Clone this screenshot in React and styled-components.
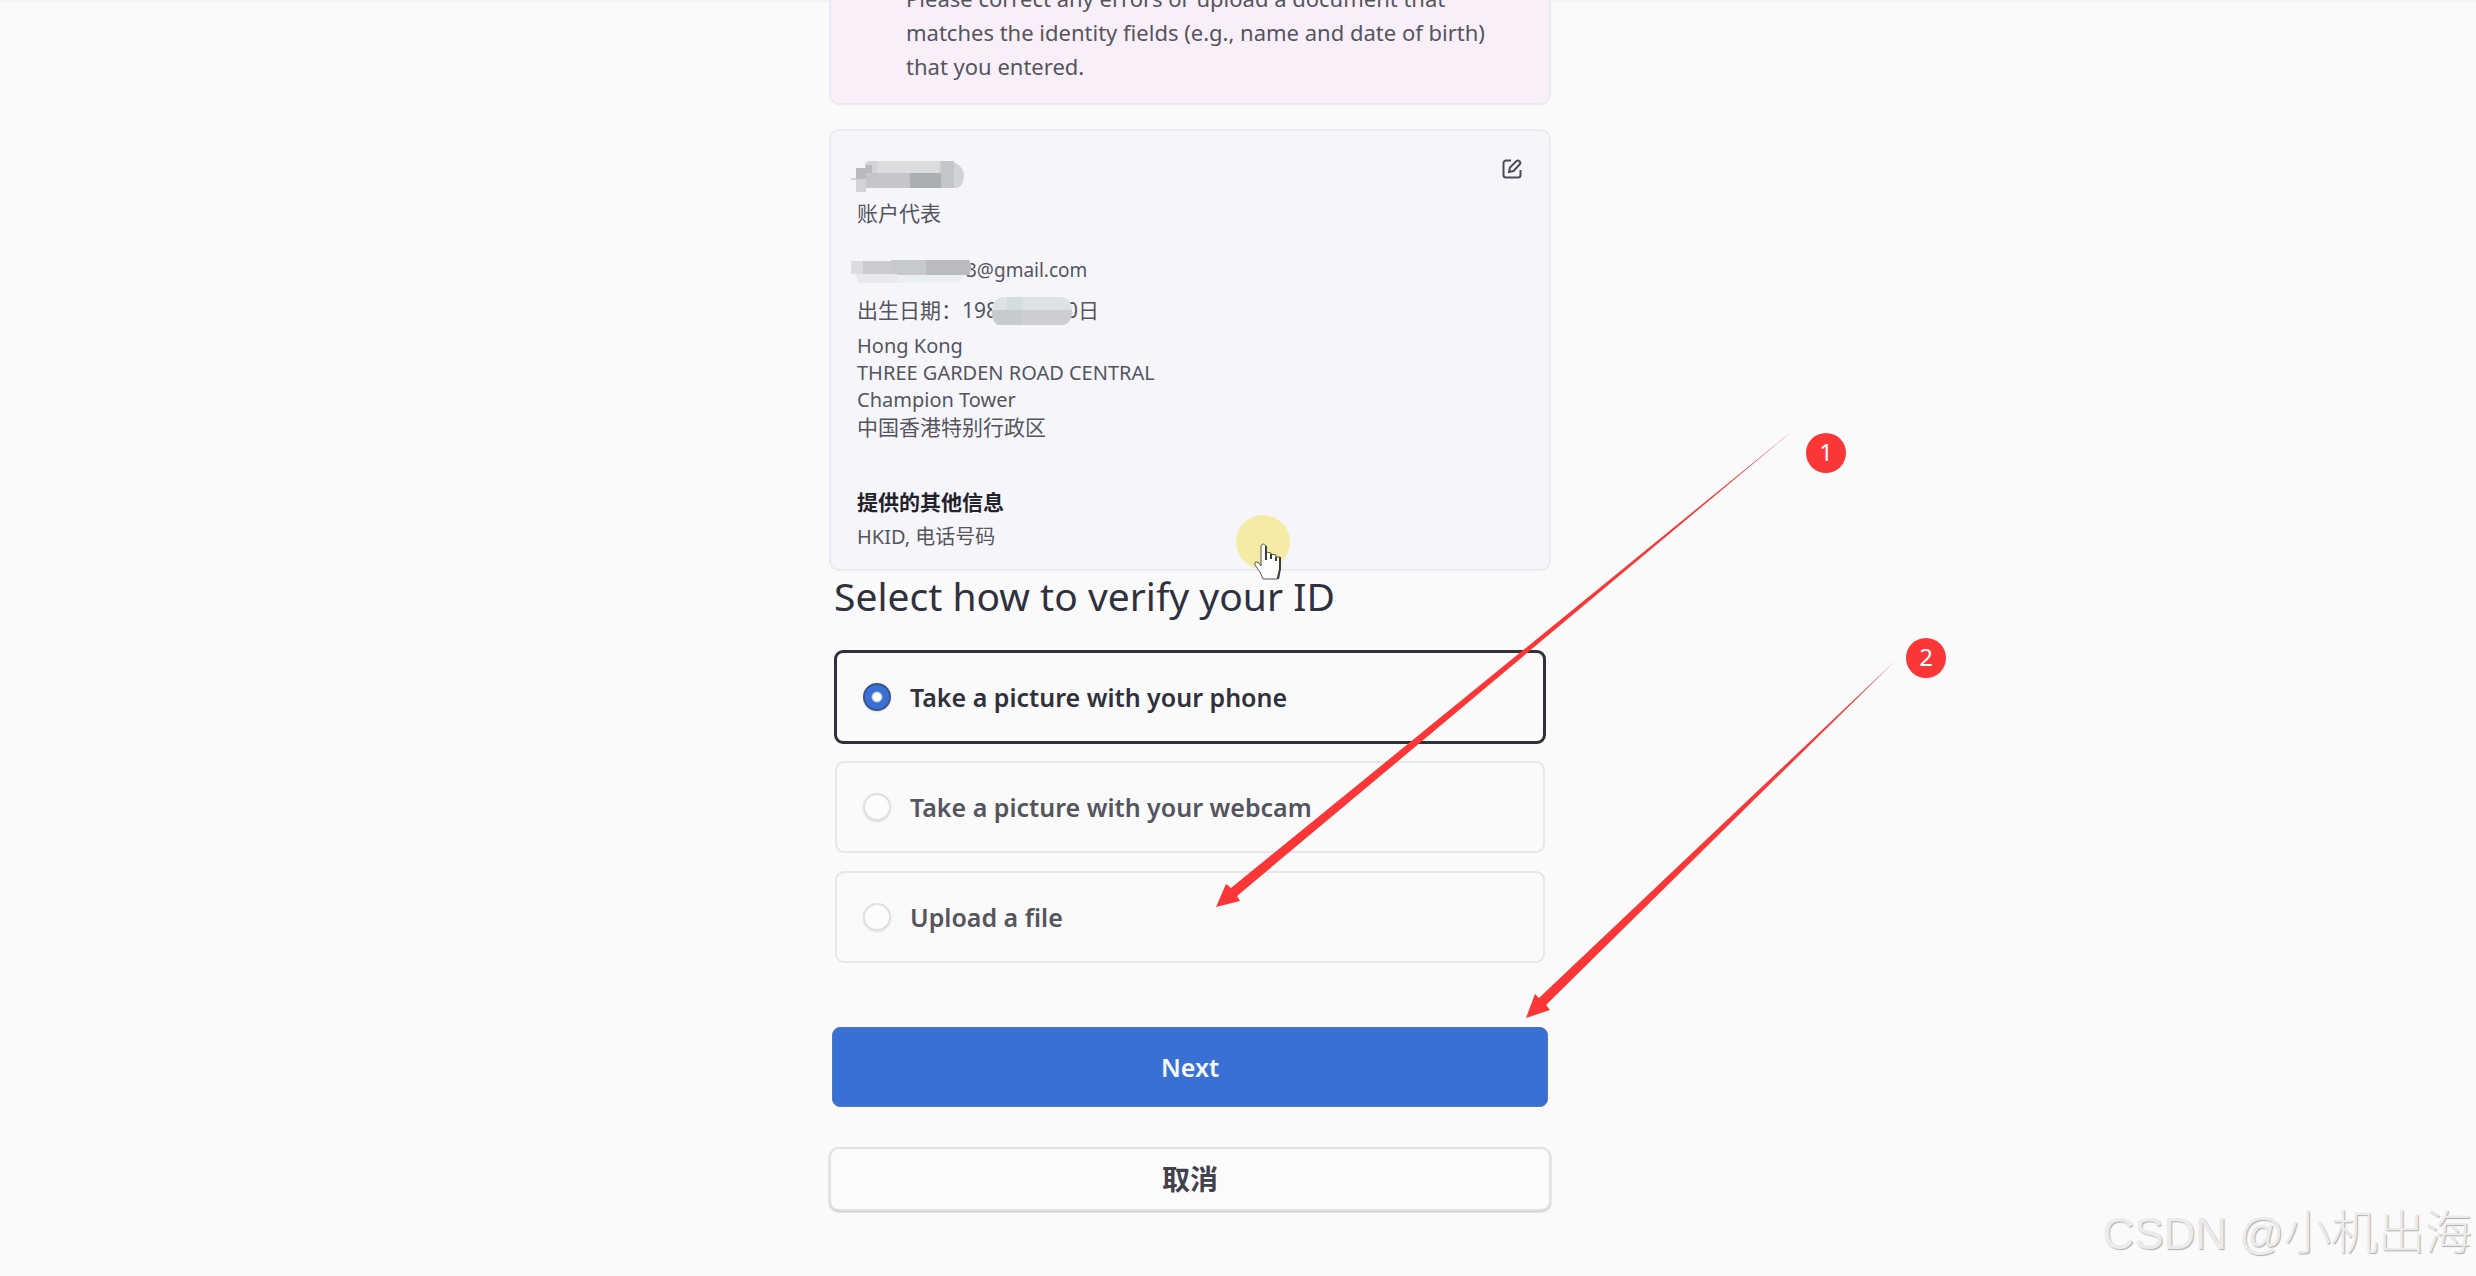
import { useState } from "react";
import styled, { createGlobalStyle } from "styled-components";

const GlobalStyle = createGlobalStyle`
  * {
    box-sizing: border-box;
  }

  body {
    margin: 0;
    background: #fafafb;
    font-family: "Noto Sans", "Noto Sans CJK SC", sans-serif;
    color: #55555d;
  }

  h2, h3, p, fieldset, address {
    margin: 0;
    padding: 0;
  }
`;

const Page = styled.div`
  position: relative;
  min-height: 100vh;
  padding-right: 96px;
  overflow: hidden;
  box-shadow: inset 0 2px 0 #f4f4f6;
`;

const Column = styled.main`
  width: 100%;
  max-width: 722px;
  margin: 0 auto;
`;

const Alert = styled.div`
  display: flex;
  align-items: flex-end;
  height: 105px;
  padding: 0 48px 20px 75px;
  border: 2px solid #ece9f2;
  border-top: none;
  border-radius: 0 0 10px 10px;
  background: #f9eff8;
  font-size: 22px;
  line-height: 34px;
`;

const Card = styled.section`
  height: 442px;
  margin-top: 24px;
  padding: 28px 27px 0 26px;
  border: 2px solid #e9ebf1;
  border-radius: 10px;
  background: #f5f5fa;
  font-size: 20px;
  line-height: 27px;
`;

const CardHeader = styled.div`
  display: flex;
  justify-content: space-between;
  align-items: flex-start;
  height: 36px;
`;

const EditButton = styled.button`
  display: flex;
  padding: 0;
  border: none;
  background: none;
  color: #4c4c58;
  cursor: pointer;
`;

const Line = styled.p`
  display: flex;
  align-items: center;
  height: 27px;
  margin-top: ${(props) => props.$gap || 0}px;
  font-size: ${(props) => props.$size || 21}px;
`;

const Address = styled.address`
  margin-top: 8px;
  font-style: normal;
`;

const Region = styled.span`
  display: block;
  font-size: 21px;
  line-height: 28px;
`;

const SubTitle = styled.h3`
  margin-top: 48px;
  color: #22222c;
  font-size: 21px;
  font-weight: 700;
  line-height: 27px;
`;

const Mask = styled.svg`
  display: block;
  flex: none;
  position: relative;
  z-index: 1;
  margin: 0 -6px;
`;

const Title = styled.h2`
  padding-left: 5px;
  color: #30313d;
  font-size: 39px;
  font-weight: 400;
  line-height: 50px;
`;

const Options = styled.fieldset`
  display: grid;
  gap: 16px;
  margin: 29px 5px 0;
  border: none;
`;

const Option = styled.label`
  display: flex;
  align-items: center;
  gap: 19px;
  height: ${(props) => (props.$checked ? 94 : 92)}px;
  margin: ${(props) => (props.$checked ? 0 : 1)}px;
  padding-left: 26px;
  border: ${(props) => (props.$checked ? "3px solid #30313d" : "2px solid #e6e6eb")};
  border-radius: 9px;
  color: ${(props) => (props.$checked ? "#30313d" : "#55555d")};
  font-size: 25px;
  font-weight: 600;
  cursor: pointer;
`;

const Radio = styled.input`
  appearance: none;
  width: 28px;
  height: 28px;
  margin: 0;
  border: 2px solid #e0e0e4;
  border-radius: 50%;
  background: #fcfcfc;
  box-shadow: 0 1px 2px rgba(0, 0, 0, 0.1);

  &:checked {
    border-color: #38538f;
    background: radial-gradient(#fff 4px, #3871d3 6px);
  }
`;

const Button = styled.button`
  display: block;
  border-radius: 8px;
  font-family: inherit;
  cursor: pointer;
`;

const NextButton = styled(Button)`
  width: calc(100% - 6px);
  height: 80px;
  margin: 63px 3px 0;
  border: 1px solid #5575b5;
  background: #3871d3;
  color: #f5f8ff;
  font-size: 25px;
  font-weight: 600;
`;

const CancelButton = styled(Button)`
  width: 100%;
  height: 64px;
  margin-top: 40px;
  border: 2px solid #e2e2e5;
  border-radius: 10px;
  background: #fbfbfc;
  box-shadow: 0 1px 2px rgba(0, 0, 0, 0.25);
  color: #41414e;
  font-size: 28px;
  font-weight: 700;
  line-height: 40px;
`;

const Overlay = styled.svg`
  position: absolute;
  top: 0;
  left: 0;
  pointer-events: none;
`;

const Badge = styled.span`
  position: absolute;
  top: ${(props) => props.$y}px;
  left: ${(props) => props.$x}px;
  width: 40px;
  height: 40px;
  border-radius: 50%;
  background: #fb3636;
  color: #fff;
  font-size: 24px;
  line-height: 38px;
  text-align: center;
`;

const Watermark = styled.span`
  position: absolute;
  right: 4px;
  bottom: 12px;
  color: #ebebeb;
  font-family: "Liberation Sans", "Noto Sans CJK SC", sans-serif;
  font-size: 44px;
  font-weight: 300;
  line-height: 60px;
  text-shadow: 1px 1px 1px #adadad;
`;

const Author = styled.span`
  font-size: 47px;
`;

const options = [
  { id: "phone", label: "Take a picture with your phone" },
  { id: "webcam", label: "Take a picture with your webcam" },
  { id: "file", label: "Upload a file" },
];

function EditIcon() {
  return (
    <svg width="20" height="20" viewBox="0 0 20 20" fill="none" stroke="currentColor" strokeWidth="2">
      <path d="M9 1.500H4A2.500 2.500 0 0 0 1.500 4V16A2.500 2.500 0 0 0 4 18.500h12A2.500 2.500 0 0 0 18.500 16v-5" />
      <path d="M7 13l1-4.500 6.500-6.500q1.500-1 3 .3t.3 3L11.500 12z" />
    </svg>
  );
}

function NameMask() {
  return (
    <Mask width="118" height="34" viewBox="0 0 118 34">
      <path d="M5 9h9V4l4-2h82c8 3 14 8 13 16-1 8-4 10-8 11H15v4H5V21H0v-2h5z" fill="#d2d3d6" />
      <path d="M5 9h10v-3h6v14H5z" fill="#b9babd" />
      <path d="M26 2h62v12H26z" fill="#dadcde" />
      <path d="M15 14h44v15H15z" fill="#c5c6ca" />
      <path d="M59 14h31v15H59z" fill="#abafb2" />
      <path d="M90 2h13v27H90z" fill="#c3c6c9" />
    </Mask>
  );
}

function EmailMask() {
  return (
    <Mask width="121" height="27" viewBox="0 0 121 27">
      <path d="M0 4h40V3h78q4 7 0 15H46v-1H0z" fill="#cbccd0" />
      <path d="M0 4h12v13H0z" fill="#dcdde0" />
      <path d="M40 3h35v15H46v-1h-6z" fill="#c6cacc" />
      <path d="M75 3h43q4 7 0 15H75z" fill="#b9bbbe" />
      <path d="M4 17h42v9H8z" fill="#e9e9ed" />
      <path d="M46 18h66l-4 8H46z" fill="#e9eff2" />
    </Mask>
  );
}

function DateMask() {
  return (
    <Mask width="80" height="28" viewBox="0 0 80 28">
      <rect width="80" height="28" rx="12" fill="#dde2e4" />
      <path d="M0 13h80c0 10-4 15-10 15H8c-5 0-8-5-8-15z" fill="#cdced2" />
      <path d="M15 0h15v13H15z" fill="#d5dcdf" />
      <path d="M0 13h30v15H8c-5 0-8-5-8-15z" fill="#c6cbce" />
    </Mask>
  );
}

function Pointer() {
  return (
    <g>
      <circle cx="1263" cy="542" r="27" fill="#f4eba5" />
      <path
        d="M1261 546q2-4 5 0v6l5 1v1l5 1v2h4v12l-3 10h-14l-3-7-5-7q-1-5 4-2l2 3z"
        fill="#fdfdfb"
        stroke="#55554a"
        strokeWidth="1"
      />
      <path d="M1266 546v14M1271 554v5M1276 557v4M1280 557v12l-2 10" fill="none" stroke="#3f3f3a" strokeWidth="2" />
    </g>
  );
}

function App() {
  const [method, setMethod] = useState("phone");

  return (
    <>
      <GlobalStyle />
      <Page>
        <Column>
          <Alert>
            <p>
              Please correct any errors or upload a document that matches the
              identity fields (e.g., name and date of birth) that you entered.
            </p>
          </Alert>

          <Card>
            <CardHeader>
              <NameMask />
              <EditButton aria-label="Edit">
                <EditIcon />
              </EditButton>
            </CardHeader>
            <Line $gap={5}>账户代表</Line>
            <Line $gap={30} $size={19}>
              <EmailMask />
              3@gmail.com
            </Line>
            <Line $gap={13}>
              出生日期：198
              <DateMask />
              0日
            </Line>
            <Address>
              Hong Kong
              <br />
              THREE GARDEN ROAD CENTRAL
              <br />
              Champion Tower
              <Region>中国香港特别行政区</Region>
            </Address>
            <SubTitle>提供的其他信息</SubTitle>
            <Line $gap={7} $size={20}>HKID, 电话号码</Line>
          </Card>

          <Title>Select how to verify your ID</Title>

          <Options>
            {options.map((option) => (
              <Option key={option.id} $checked={method === option.id}>
                <Radio
                  type="radio"
                  name="method"
                  checked={method === option.id}
                  onChange={() => setMethod(option.id)}
                />
                {option.label}
              </Option>
            ))}
          </Options>

          <NextButton type="submit">Next</NextButton>
          <CancelButton type="button">取消</CancelButton>
        </Column>

        <Overlay width="2476" height="1276" viewBox="0 0 2476 1276">
          <Pointer />
          <g fill="#fb3636">
            <path d="M1791 432L1231 888 1226 884 1216 907 1240 901 1237 896z" />
            <path d="M1896 660L1539 998 1535 994 1526 1018 1550 1010 1546 1005z" />
          </g>
        </Overlay>
        <Badge $x={1806} $y={433}>1</Badge>
        <Badge $x={1906} $y={638}>2</Badge>
        <Watermark>
          CSDN @<Author>小机出海</Author>
        </Watermark>
      </Page>
    </>
  );
}

export default App;
